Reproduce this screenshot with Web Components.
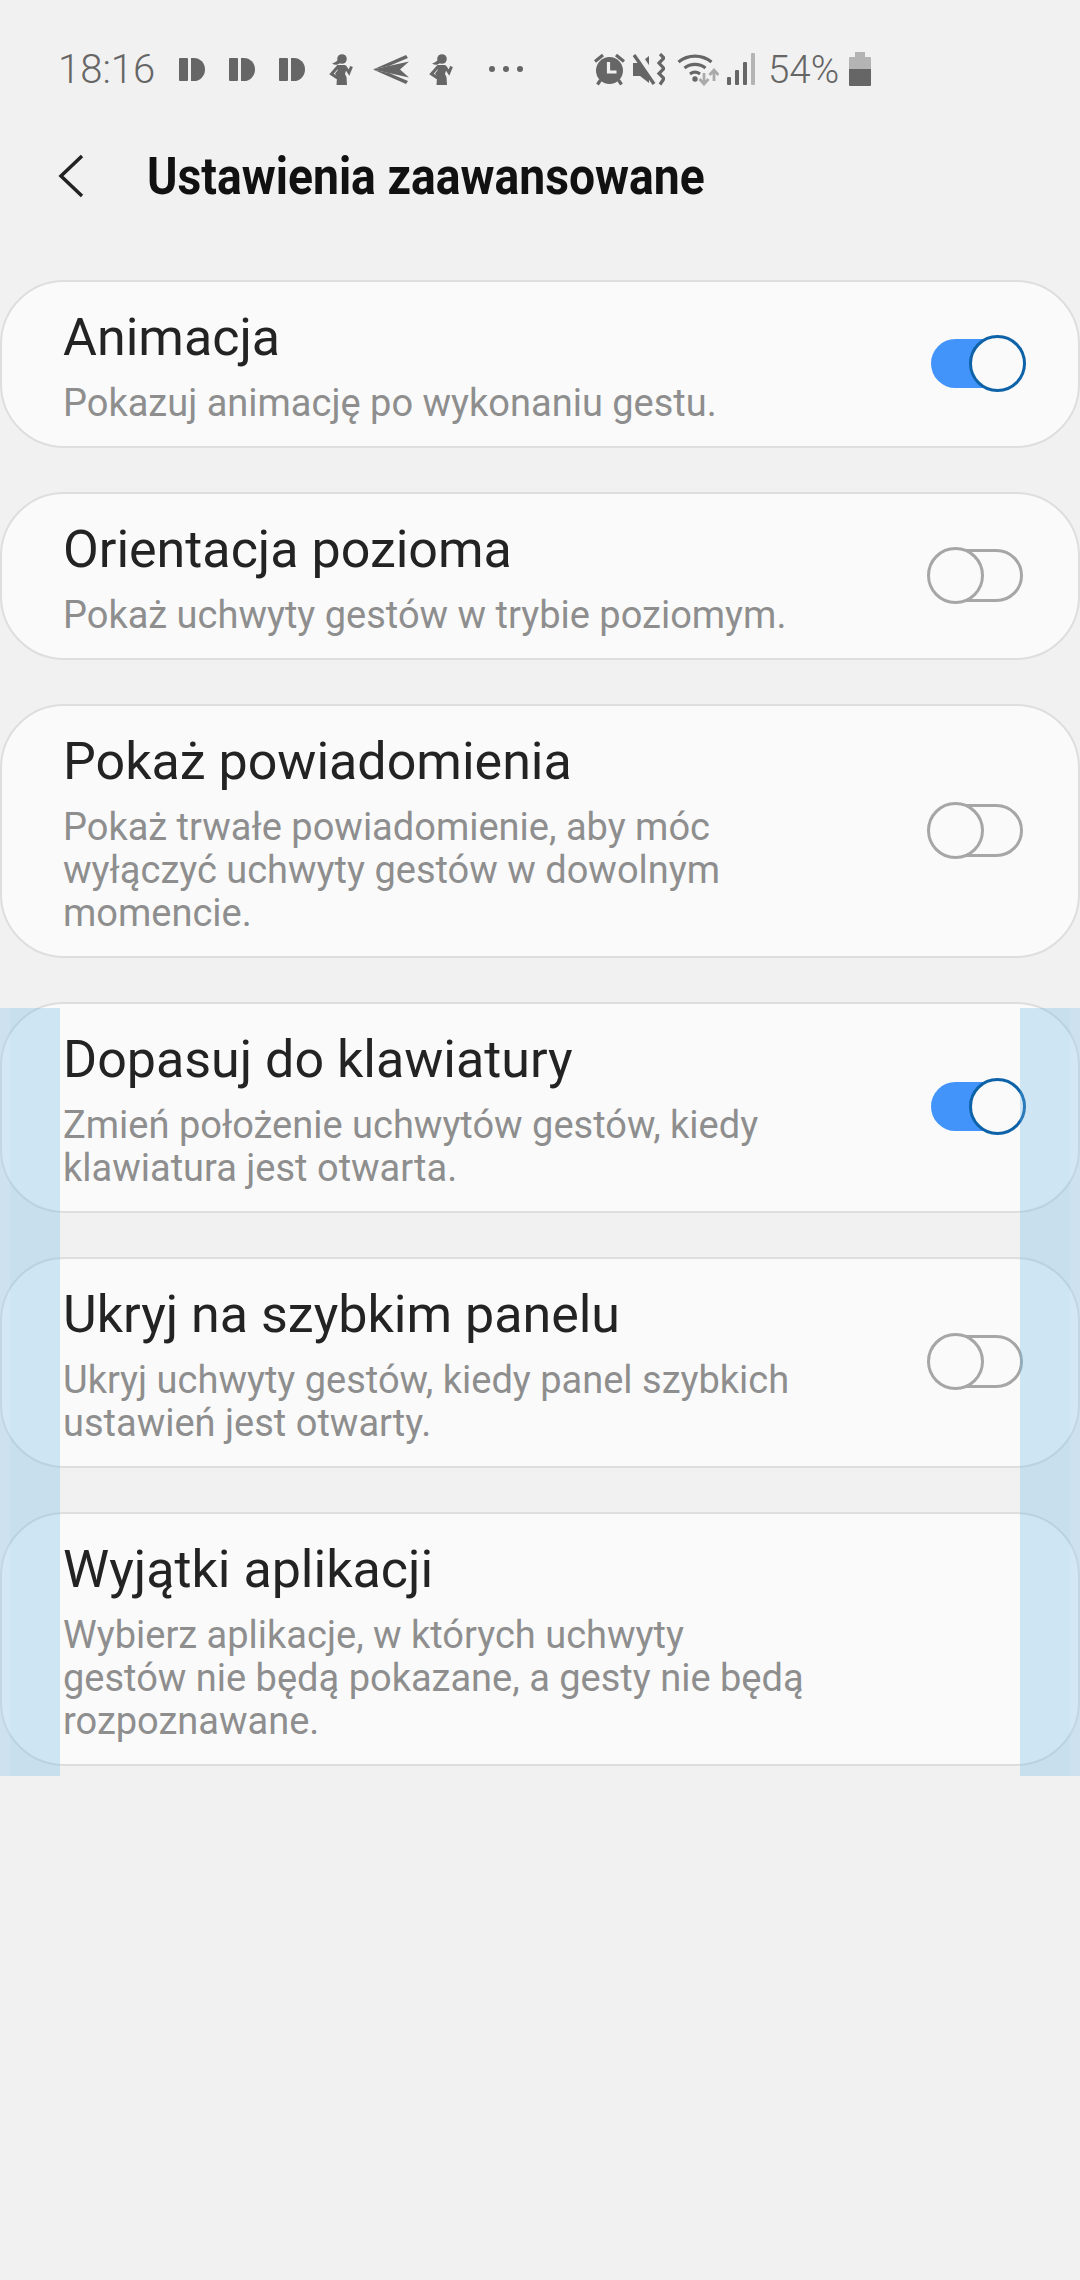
<!DOCTYPE html>
<html lang="pl">
<head>
<meta charset="utf-8">
<title>Ustawienia zaawansowane</title>
<style>
  html, body { margin: 0; padding: 0; }
  body {
    width: 1080px;
    height: 2280px;
    overflow: hidden;
    background: #f1f1f1;
    font-family: Roboto, "Noto Sans", sans-serif;
    position: relative;
  }
  main {
    display: flex;
    flex-direction: column;
    gap: 44px;
  }
</style>
</head>
<body>
<status-bar></status-bar>
<app-header>Ustawienia zaawansowane</app-header>
<main>
  <setting-card toggle="on">
    <span slot="title">Animacja</span>
    Pokazuj animację po wykonaniu gestu.
  </setting-card>
  <setting-card toggle="off">
    <span slot="title">Orientacja pozioma</span>
    Pokaż uchwyty gestów w trybie poziomym.
  </setting-card>
  <setting-card toggle="off">
    <span slot="title">Pokaż powiadomienia</span>
    Pokaż trwałe powiadomienie, aby móc wyłączyć uchwyty gestów w dowolnym momencie.
  </setting-card>
  <setting-card toggle="on">
    <span slot="title">Dopasuj do klawiatury</span>
    Zmień położenie uchwytów gestów, kiedy klawiatura jest otwarta.
  </setting-card>
  <setting-card toggle="off">
    <span slot="title">Ukryj na szybkim panelu</span>
    Ukryj uchwyty gestów, kiedy panel szybkich ustawień jest otwarty.
  </setting-card>
  <setting-card>
    <span slot="title">Wyjątki aplikacji</span>
    Wybierz aplikacje, w których uchwyty gestów nie będą pokazane, a gesty nie będą rozpoznawane.
  </setting-card>
</main>
<gesture-handles></gesture-handles>

<script>
const C = "#666";
const BG = "#f1f1f1";

const pebble = `<svg width="26" height="23" viewBox="0 0 26 23"><rect y="0" width="9" height="23" rx="1" fill="${C}"/><path d="M12 0h3a11 11.500 0 0 1 0 23h-3z" fill="${C}"/></svg>`;

const person = `<svg width="24" height="31" viewBox="0 0 24 31" fill="${C}">
  <circle cx="13" cy="5" r="4.800"/>
  <path d="M9 6C7 8 5 9 3 9.500 6 11.500 9 11 11 9z"/>
  <path d="M8.500 11h8l1 4-1.500 5 1.500 3 .5 8H7.500l.5-8-2-3.500 2.500-3z"/>
  <path d="M9.500 12 2.500 20l6 4M16 12.500l4 6 2.500-6" fill="none" stroke="${C}" stroke-width="3"/>
</svg>`;

const plane = `<svg width="36" height="29" viewBox="0 0 36 29" fill="${C}">
  <path d="M0 14.500 33 0 35 3 16 11z"/>
  <path d="M0 14.500 36 6.500 27 14.500 36 22.500z"/>
  <path d="M0 14.500 16 18 35 26 33 29z"/>
</svg>`;

const alarm = `<svg width="33" height="33" viewBox="0 0 33 33">
  <circle cx="16.500" cy="17.500" r="13.500" fill="${C}"/>
  <path d="M10 2 2 8.500M23 2l8 6.500M7.500 27l-3 4.500M25.500 27l3 4.500" stroke="${C}" stroke-width="3.200" fill="none"/>
  <path d="M15.500 9v10h8" stroke="${BG}" stroke-width="3.200" fill="none"/>
</svg>`;

const mute = `<svg width="32" height="33" viewBox="0 0 32 33">
  <path d="M0 10h7L16 3v27L7 23H0z" fill="${C}"/>
  <path d="M4 0l20 30" stroke="${BG}" stroke-width="6.500"/>
  <path d="M1 2l20 29" stroke="${C}" stroke-width="3.400"/>
  <path d="M27 1l4 4-5 5 5 5.500-5 5 5 5-4 6" stroke="${C}" stroke-width="3.200" fill="none"/>
</svg>`;

const wifi = `<svg width="42" height="34" viewBox="0 0 42 34" fill="none">
  <path d="M1.500 10a26 26 0 0 1 33 0M7.500 16a17 17 0 0 1 21 0M13 22a8.500 8.500 0 0 1 10 0" stroke="${C}" stroke-width="3.200"/>
  <circle cx="18" cy="27" r="2.700" fill="${C}"/>
  <path d="M27 21v11m-4.500-5 4.500 5 4.500-5" stroke="#aaa" stroke-width="2.800"/>
  <path d="M37 29V18m-4.500 5 4.500-5 4.500 5" stroke="#aaa" stroke-width="2.800"/>
</svg>`;

const signal = `<svg width="28" height="32" viewBox="0 0 28 32">
  <rect x="0" y="24" width="4" height="8" rx="1" fill="${C}"/>
  <rect x="8" y="17" width="4" height="15" rx="1" fill="${C}"/>
  <rect x="16" y="9" width="4" height="23" rx="1" fill="${C}"/>
  <rect x="24" y="0" width="4" height="32" rx="1" fill="#b4b4b4"/>
</svg>`;

const battery = `<svg width="22" height="34" viewBox="0 0 22 34">
  <path d="M6 0h10v5h5a1 1 0 0 1 1 1v11H0V6a1 1 0 0 1 1-1h5z" fill="#b4b4b4"/>
  <path d="M0 17h22v16a1 1 0 0 1-1 1H1a1 1 0 0 1-1-1z" fill="${C}"/>
</svg>`;

class StatusBar extends HTMLElement {
  constructor() {
    super();
    this.attachShadow({ mode: "open" });
    this.shadowRoot.innerHTML = `
      <style>
        :host {
          display: flex;
          align-items: center;
          height: 138px;
          box-sizing: border-box;
          padding-left: 58px;
          color: ${C};
          font: 300 40px Roboto, sans-serif;
        }
        .time { width: 121px; flex: none; }
        .left, .right, .ids { display: flex; align-items: center; }
        .ids { gap: 24px; margin-right: 4px; }
        .left { gap: 20px; width: 414px; flex: none; }
        .dots { display: flex; gap: 8px; margin-left: 16px; }
        .dots i { width: 6px; height: 6px; border-radius: 50%; background: ${C}; }
        .right { gap: 8px; }
        .right svg:nth-child(2) { margin-left: -1px; margin-right: 4px; }
        .pct { margin: 0 2px 0 5px; font-size: 38.500px; }
      </style>
      <span class="time">18:16</span>
      <div class="left">
        <div class="ids">${pebble}${pebble}${pebble}</div>
        ${person}${plane}${person}
        <div class="dots"><i></i><i></i><i></i></div>
      </div>
      <div class="right">
        ${alarm}${mute}${wifi}${signal}
        <span class="pct">54%</span>
        ${battery}
      </div>
    `;
  }
}

class AppHeader extends HTMLElement {
  constructor() {
    super();
    this.attachShadow({ mode: "open" });
    this.shadowRoot.innerHTML = `
      <style>
        :host {
          display: flex;
          align-items: center;
          height: 76px;
          margin-bottom: 66px;
          padding-left: 58px;
        }
        svg { flex: none; margin-right: 63px; }
        .title {
          font: 700 52px Roboto, sans-serif;
          color: #111;
          white-space: nowrap;
          display: inline-block;
          transform: scaleX(.89);
          transform-origin: left center;
        }
      </style>
      <svg width="26" height="44" viewBox="0 0 26 44" fill="none">
        <path d="M24 2 3 22l21 20" stroke="#222" stroke-width="3.500"/>
      </svg>
      <span class="title"><slot></slot></span>
    `;
  }
}

class AppToggle extends HTMLElement {
  constructor() {
    super();
    this.attachShadow({ mode: "open" });
    this.shadowRoot.innerHTML = `
      <style>
        :host {
          display: block;
          flex: none;
          position: relative;
          width: 99px;
          height: 57px;
          margin-top: -7px;
        }
        .track, .thumb { position: absolute; box-sizing: border-box; }
        .track { border-radius: 27px; }
        .thumb {
          top: 0;
          width: 57px;
          height: 57px;
          border-radius: 50%;
          background: #fafafa;
        }
        :host([state="off"]) .track {
          left: 10px; right: 3px; top: 2px; bottom: 2px;
          border: 3px solid #a6a6a6;
        }
        :host([state="off"]) .thumb { left: 0; border: 3px solid #a6a6a6; }
        :host([state="on"]) .track {
          left: 4px; right: 10px; top: 4px; bottom: 4px;
          background: #4294fb;
        }
        :host([state="on"]) .thumb { right: 0; border: 3px solid #0e62a8; }
      </style>
      <div class="track"></div>
      <div class="thumb"></div>
    `;
  }
}

class SettingCard extends HTMLElement {
  constructor() {
    super();
    this.attachShadow({ mode: "open" });
    this.shadowRoot.innerHTML = `
      <style>
        :host {
          display: flex;
          align-items: center;
          justify-content: space-between;
          box-sizing: border-box;
          padding: 26px 52px 21px 61px;
          background: #fafafa;
          border: 2px solid #dedede;
          border-radius: 64px;
        }
        .text { max-width: 745px; }
        .title {
          font-size: 52px;
          line-height: 60px;
          color: #232323;
          margin-bottom: 14px;
        }
        .sub {
          font-size: 38px;
          line-height: 43px;
          color: #8e8e8e;
        }
      </style>
      <div class="text">
        <div class="title"><slot name="title"></slot></div>
        <div class="sub"><slot></slot></div>
      </div>
      <slot name="control"></slot>
    `;
    const state = this.getAttribute("toggle");
    if (state) {
      const toggle = document.createElement("app-toggle");
      toggle.setAttribute("state", state);
      this.shadowRoot.appendChild(toggle);
    }
  }
}

// pasy obszaru gestow, leza nad kartami
class GestureHandles extends HTMLElement {
  constructor() {
    super();
    this.attachShadow({ mode: "open" });
    this.shadowRoot.innerHTML = `
      <style>
        :host {
          display: block;
          position: absolute;
          left: 0;
          top: 1008px;
          width: 1080px;
          height: 768px;
          pointer-events: none;
        }
        .strip {
          position: absolute;
          top: 0;
          bottom: 0;
          width: 60px;
          background: rgba(107, 183, 227, .3);
        }
        .strip.l { left: 0; }
        .strip.r { right: 0; }
        .strip i {
          position: absolute;
          top: 0;
          bottom: 0;
          width: 10px;
          background: rgba(255, 255, 255, .1);
        }
        .strip.l i { left: 0; }
        .strip.r i { right: 0; }
      </style>
      <div class="strip l"><i></i></div>
      <div class="strip r"><i></i></div>
    `;
  }
}

customElements.define("status-bar", StatusBar);
customElements.define("app-header", AppHeader);
customElements.define("app-toggle", AppToggle);
customElements.define("setting-card", SettingCard);
customElements.define("gesture-handles", GestureHandles);
</script>
</body>
</html>
